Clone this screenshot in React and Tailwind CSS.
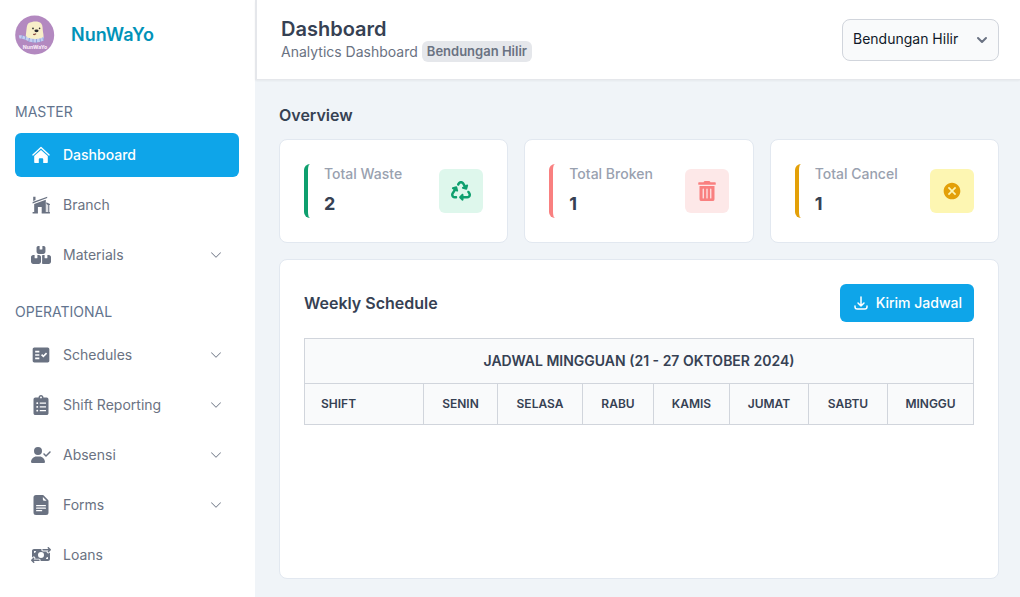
import { FaClipboardList, FaTrashAlt } from "react-icons/fa";
import { FaBoxesStacked, FaUserCheck, FaMoneyBillTransfer, FaRecycle } from "react-icons/fa6";
import { MdFactCheck, MdCancel } from "react-icons/md";
import { BsChevronDown, BsFileEarmarkTextFill } from "react-icons/bs";
import { HiOutlineDownload } from "react-icons/hi";
import { FiChevronDown } from "react-icons/fi";

function HomeIcon({ className }) {
  return (
    <svg viewBox="0 0 20 20" className={className} fill="currentColor" aria-hidden="true">
      <path d="M1.900 9.900L10 2.500L18.100 9.900" fill="none" stroke="currentColor" strokeWidth="1.400" strokeLinecap="round" strokeLinejoin="round" />
      <path d="M10 4.900L16.800 11V16.900Q16.800 18.100 15.600 18.100H12.200V14.200Q12.200 13.300 11.300 13.300H8.700Q7.800 13.300 7.800 14.200V18.100H4.400Q3.200 18.100 3.200 16.900V11Z" />
    </svg>
  );
}

function BranchIcon({ className }) {
  return (
    <svg viewBox="0 0 20 20" className={className} fill="currentColor" aria-hidden="true">
      <path d="M2.200 1.700h2.300v3.300L2.200 6Z" />
      <path d="M1.600 7.100L16.200 1.700V3L1.600 8.500Z" />
      <path d="M3.200 9L14.800 4.700V17.200H10.700V12H6.900V17.200H3.200Z" />
      <path d="M15.300 7.200L18.900 8.900V10H18.300V17.200H17.200V10L15.300 9.200Z" />
      <path d="M1.600 17H6.900V18.400H1.600ZM10.700 17H18.900V18.400H10.700Z" />
      <path d="M15.600 10h.800v7h-.800Z" opacity="0.500" />
    </svg>
  );
}

const sections = [
  {
    title: "MASTER",
    items: [
      { label: "Dashboard", icon: HomeIcon, active: true },
      { label: "Branch", icon: BranchIcon },
      { label: "Materials", icon: FaBoxesStacked, expandable: true },
    ],
  },
  {
    title: "OPERATIONAL",
    items: [
      { label: "Schedules", icon: MdFactCheck, expandable: true },
      { label: "Shift Reporting", icon: FaClipboardList, expandable: true },
      { label: "Absensi", icon: FaUserCheck, expandable: true },
      { label: "Forms", icon: BsFileEarmarkTextFill, expandable: true },
      { label: "Loans", icon: FaMoneyBillTransfer },
    ],
  },
];

const stats = [
  { label: "Total Waste", value: 2, icon: FaRecycle, bar: "border-[#0e9f6e]", tile: "bg-[#def7ec] text-[#0e9f6e]" },
  { label: "Total Broken", value: 1, icon: FaTrashAlt, bar: "border-[#f98080]", tile: "bg-[#fde8e8] text-[#f98080]" },
  { label: "Total Cancel", value: 1, icon: MdCancel, bar: "border-[#e3a008]", tile: "bg-[#fdf6b2] text-[#e3a008]" },
];

const columns = [
  { label: "SHIFT", width: "w-[119px]" },
  { label: "SENIN", width: "w-[74px]" },
  { label: "SELASA", width: "w-[85px]" },
  { label: "RABU", width: "w-[71px]" },
  { label: "KAMIS", width: "w-[76px]" },
  { label: "JUMAT", width: "w-[79px]" },
  { label: "SABTU", width: "w-[79px]" },
  { label: "MINGGU", width: "w-[86px]" },
];

function Logo() {
  return (
    <svg viewBox="0 0 40 40" className="size-10" role="img" aria-label="NunWaYo logo">
      <circle cx="19.700" cy="20" r="19.500" fill="#b389c0" />
      <path d="M10.800 25C10.500 21 11.200 17 11.800 12C12.300 8.500 14 7.300 17 7C20 6 24.500 6.500 26.200 8.500C28 10.500 27.500 14 28 17C28.600 20 28.800 22 28.300 25Z" fill="#f8efc9" />
      <path d="M3.800 20.500C8 19 11 22.500 16 23.600C21 24.500 25 24 28.800 21.800V25.600C24 28 17 28 13 26C9 24 7 23.500 4.500 23.500Z" fill="#c3cef2" />
      <path d="M7.500 20l-.800 3.500M11 21l-1 4M14.500 23l-.800 4M18 24v4M21.500 24v4M25 23.500l.500 3.500M28 22.500l.500 3" stroke="#8f9dd6" strokeWidth="0.900" />
      <circle cx="18" cy="13.400" r="0.900" fill="#333" />
      <circle cx="24.600" cy="13.400" r="0.800" fill="#333" />
      <ellipse cx="21.500" cy="15.800" rx="2.100" ry="1.400" fill="#26262e" />
      <path d="M18.200 19.200q1.400 .800 2.800-.600" stroke="#8a4a44" strokeWidth="1.300" fill="none" />
      <text x="20" y="33.600" textAnchor="middle" fontSize="5.200" fontWeight="800" fill="#f6e6f5" fontFamily="Inter, sans-serif">
        NunWaYo
      </text>
    </svg>
  );
}

function NavItem({ label, icon: Icon, active, expandable }) {
  const tone = active ? "bg-[#0ea5e9] font-medium text-white" : "text-gray-500";
  const body = (
    <>
      <Icon className="size-5 shrink-0" />
      <span className="flex-1 text-left">{label}</span>
      {expandable && <BsChevronDown className="size-3 shrink-0" />}
    </>
  );
  const classes = `flex h-11 w-full items-center gap-3 rounded-md pr-[17px] pl-4 text-sm ${tone}`;
  return (
    <li>
      {expandable ? (
        <button type="button" className={classes}>{body}</button>
      ) : (
        <a href="#" className={classes}>{body}</a>
      )}
    </li>
  );
}

function Sidebar() {
  return (
    <aside className="w-[255px] shrink-0 bg-white px-4 pt-[15px] pl-[15px]">
      <a href="#" className="flex items-center gap-4">
        <Logo />
        <span className="text-lg font-semibold text-cyan-600">NunWaYo</span>
      </a>
      <nav className="mt-[47px] flex flex-col gap-[25px]">
        {sections.map((section) => (
          <div key={section.title}>
            <h2 className="text-sm text-slate-500">{section.title}</h2>
            <ul className="mt-[11px] flex flex-col gap-1.5">
              {section.items.map((item) => (
                <NavItem key={item.label} {...item} />
              ))}
            </ul>
          </div>
        ))}
      </nav>
    </aside>
  );
}

function Header() {
  return (
    <header className="flex items-center justify-between border-b border-l-2 border-gray-200 bg-white py-[17px] pr-[21px] pl-6 shadow-xs">
      <div>
        <h1 className="text-xl leading-6 font-semibold text-gray-700">Dashboard</h1>
        <p className="flex items-center gap-1 text-sm text-gray-500">
          Analytics Dashboard
          <span className="rounded-md bg-gray-200 px-[5px] text-[13px] leading-[21px] font-semibold">Bendungan Hilir</span>
        </p>
      </div>
      <div className="relative">
        <select
          aria-label="Branch"
          className="h-[42px] w-[157px] appearance-none rounded-lg border border-gray-300 bg-gray-50 pr-8 pb-0.5 pl-[10px] text-sm text-gray-900"
        >
          <option>Bendungan Hilir</option>
        </select>
        <FiChevronDown className="pointer-events-none absolute top-[13px] right-[9px] size-4 stroke-3 text-gray-500" />
      </div>
    </header>
  );
}

function StatCard({ label, value, icon: Icon, bar, tile }) {
  return (
    <article className="flex flex-1 items-center justify-between rounded-lg border border-slate-200 bg-white p-6">
      <div className={`flex flex-col gap-1.5 rounded-md border-l-4 pl-4 ${bar}`}>
        <h3 className="text-sm font-medium text-gray-400">{label}</h3>
        <p className="text-lg font-bold text-gray-700">{value}</p>
      </div>
      <div className={`flex size-11 items-center justify-center rounded-md ${tile}`}>
        <Icon className="size-5" />
      </div>
    </article>
  );
}

function Schedule() {
  return (
    <section className="min-h-80 rounded-lg border border-slate-200 bg-white p-6">
      <div className="flex items-center justify-between">
        <h2 className="font-semibold text-gray-700">Weekly Schedule</h2>
        <button type="button" className="flex h-[38px] items-center gap-1.5 rounded-md bg-[#0ea5e9] px-3 text-sm font-medium text-white">
          <HiOutlineDownload className="size-[18px]" />
          Kirim Jadwal
        </button>
      </div>
      <table className="mt-4 w-full table-fixed border-collapse text-gray-700">
        <colgroup>
          {columns.map((c) => (
            <col key={c.label} className={c.width} />
          ))}
        </colgroup>
        <thead className="bg-gray-50">
          <tr>
            <th colSpan={8} className="h-[45px] border border-gray-300 text-sm font-semibold">
              JADWAL MINGGUAN (21 - 27 OKTOBER 2024)
            </th>
          </tr>
          <tr>
            {columns.map((c) => (
              <th key={c.label} className="h-[41px] border border-gray-300 text-center text-xs font-semibold first:pl-4 first:text-left">
                {c.label}
              </th>
            ))}
          </tr>
        </thead>
      </table>
    </section>
  );
}

export default function App() {
  return (
    <div className="flex min-h-screen bg-[#f0f4f8] font-['Inter','Roboto',sans-serif]">
      <Sidebar />
      <div className="min-w-0 flex-1">
        <Header />
        <main className="pt-[23px] pr-[21px] pb-[18px] pl-6">
          <h2 className="font-semibold text-gray-700">Overview</h2>
          <div className="mt-3 flex gap-4">
            {stats.map((s) => (
              <StatCard key={s.label} {...s} />
            ))}
          </div>
          <div className="mt-4">
            <Schedule />
          </div>
        </main>
      </div>
    </div>
  );
}
